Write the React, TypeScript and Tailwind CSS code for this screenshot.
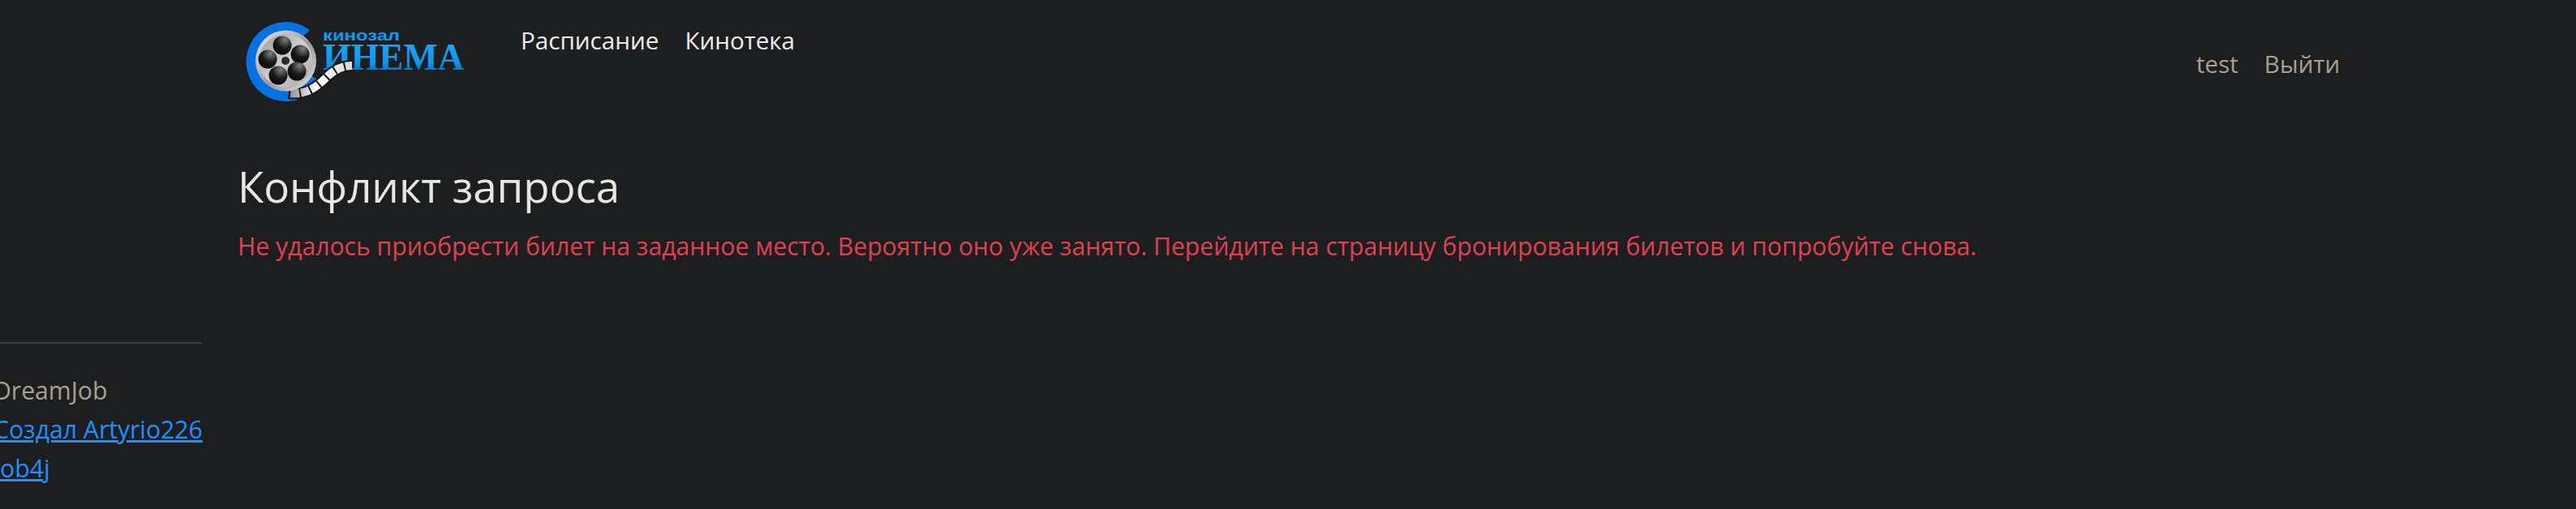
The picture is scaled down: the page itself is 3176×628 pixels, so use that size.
import React from 'react';

const Logo: React.FC = () => (
  <svg width="320" height="130" viewBox="0 0 320 130" className="mt-[10px] shrink-0">
    <defs>
      <linearGradient id="blueText" x1="0" y1="0" x2="0" y2="1">
        <stop offset="0" stopColor="#18aefc" />
        <stop offset="0.65" stopColor="#0e96ec" />
        <stop offset="1" stopColor="#05538f" />
      </linearGradient>
      <linearGradient id="reelMetal" x1="0" y1="0" x2="1" y2="1">
        <stop offset="0" stopColor="#ececec" />
        <stop offset="0.55" stopColor="#9a9a9a" />
        <stop offset="1" stopColor="#e4e4e4" />
      </linearGradient>
      <linearGradient id="reelFace" x1="0" y1="0" x2="1" y2="1">
        <stop offset="0" stopColor="#9a9a9a" />
        <stop offset="0.5" stopColor="#d0d0d0" />
        <stop offset="1" stopColor="#a8a8a8" />
      </linearGradient>
      <radialGradient id="reelHole" cx="0.65" cy="0.2" r="0.9">
        <stop offset="0" stopColor="#808080" />
        <stop offset="0.5" stopColor="#1c1c1c" />
        <stop offset="1" stopColor="#000000" />
      </radialGradient>
      <linearGradient id="filmStrip" x1="0" y1="0" x2="1" y2="0">
        <stop offset="0" stopColor="#8a8a8a" />
        <stop offset="0.45" stopColor="#ffffff" />
        <stop offset="1" stopColor="#d8d8d8" />
      </linearGradient>
    </defs>

    {/* blue ring */}
    <path d="M 102 27 A 49 49 0 1 0 92 111 L 112 88 L 72 66 L 92 36 Z" fill="#0571e2" />

    {/* wordmark */}
    <text x="118" y="40" fontFamily="'Liberation Sans', sans-serif" fontWeight="700" fontSize="19" fill="#0d9bf0" textLength="95" lengthAdjust="spacingAndGlyphs">
      кинозал
    </text>
    <text x="118" y="76" fontFamily="'Liberation Serif', serif" fontWeight="700" fontSize="47" fill="url(#blueText)" textLength="174" lengthAdjust="spacingAndGlyphs">
      ИНЕМА
    </text>

    {/* film strip */}
    <path d="M 76 105 C 98 108 112 96 123 85 C 133 75 143 71 154 71" fill="none" stroke="#151515" strokeWidth="14" />
    <path d="M 76 105 C 98 108 112 96 123 85 C 133 75 143 71 154 71" fill="none" stroke="url(#filmStrip)" strokeWidth="10" />
    <path d="M 76 105 C 98 108 112 96 123 85 C 133 75 143 71 154 71" fill="none" stroke="#151515" strokeWidth="11" strokeDasharray="2 11" />

    {/* reel */}
    <circle cx="72.5" cy="65" r="37.5" fill="url(#reelMetal)" />
    <circle cx="72.5" cy="65" r="33" fill="url(#reelFace)" />
    <circle cx="68" cy="46" r="11.5" fill="url(#reelHole)" />
    <circle cx="90" cy="57" r="11.5" fill="url(#reelHole)" />
    <circle cx="86" cy="78" r="11.5" fill="url(#reelHole)" />
    <circle cx="63" cy="83" r="11.5" fill="url(#reelHole)" />
    <circle cx="50" cy="63" r="11.5" fill="url(#reelHole)" />
    <circle cx="72" cy="65" r="5" fill="#2a2a2a" />
  </svg>
);

const App: React.FC = () => {
  return (
    <div className="h-[628px] w-[3176px] overflow-hidden bg-[#1d1e20] font-['Open_Sans',sans-serif] text-[30.15px] leading-[48px] text-[#e8e6e3]">
      {/* Navbar */}
      <nav className="flex h-[148px] pl-[280px] pr-[291px] text-[29.6px]">
        <Logo />
        <div className="ml-[42px] mt-[26px] flex h-[48px] gap-[32px] text-[#f0eeeb]">
          <a>Расписание</a>
          <a>Кинотека</a>
        </div>
        <div className="ml-auto mt-[55px] flex h-[48px] gap-[32px] text-[#a89f91]">
          <a>test</a>
          <a>Выйти</a>
        </div>
      </nav>

      {/* Message */}
      <main className="pl-[293px] pt-[48px]">
        <h3 className="text-[52.8px] leading-[68px]">Конфликт запроса</h3>
        <p className="mt-[16px] text-[#e04050]">
          Не удалось приобрести билет на заданное место. Вероятно оно уже занято. Перейдите на страницу бронирования билетов и попробуйте снова.
        </p>
      </main>

      {/* Footer */}
      <footer className="mt-[94px] w-[249px]">
        <hr className="border-t-2 border-[#3a3e41]" />
        <div className="ml-[-8px] mt-[34px] whitespace-nowrap">
          <div className="text-[#a89f91]">DreamJob</div>
          <div><a className="text-[#1e90ff] underline">Создал Artyrio226</a></div>
          <div><a className="text-[#1e90ff] underline">Job4j</a></div>
        </div>
      </footer>
    </div>
  );
};

export default App;
